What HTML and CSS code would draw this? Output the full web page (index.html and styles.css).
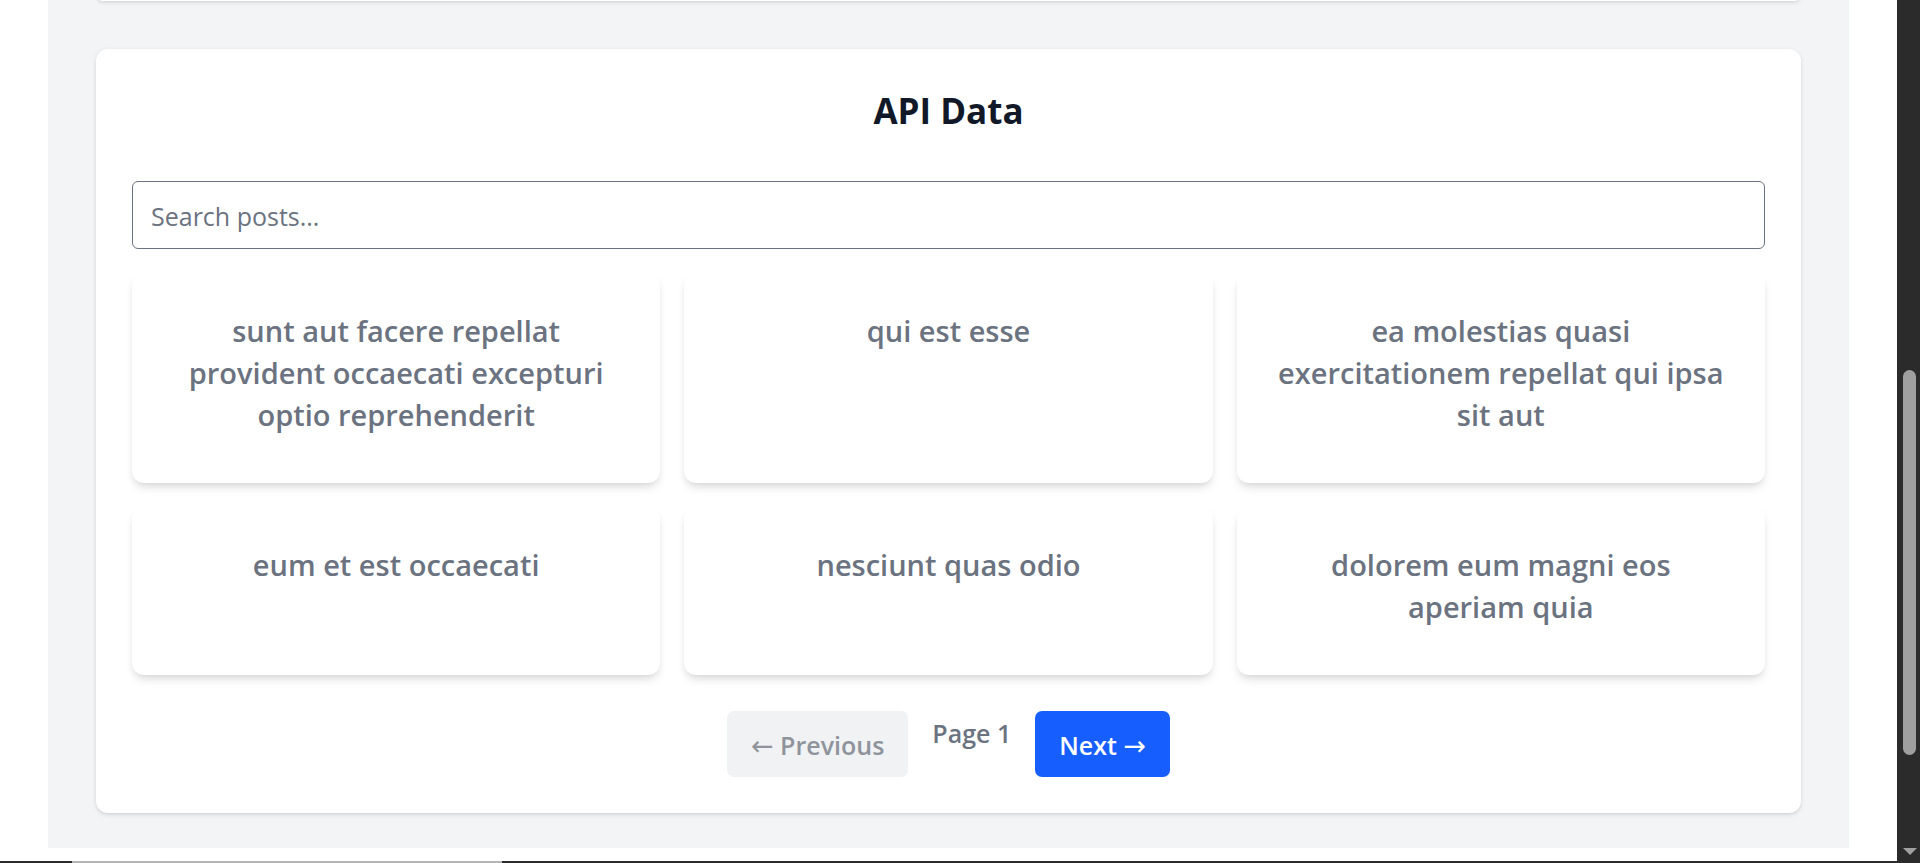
FILE: index.html
```html
<!DOCTYPE html>
<html lang="en">
<head>
<meta charset="utf-8">
<title>API Data</title>
<link rel="stylesheet" href="styles.css">
</head>
<body>
<div class="screen">
  <div class="viewport">
    <main class="page">
      <div class="shell">
        <div class="prev-card"></div>
        <section class="panel">
          <h2 class="panel-title">API Data</h2>
          <input class="search" type="text" placeholder="Search posts...">
          <div class="post-grid">
            <article class="post"><h3 class="post-title">sunt aut facere repellat provident occaecati excepturi optio reprehenderit</h3></article>
            <article class="post"><h3 class="post-title">qui est esse</h3></article>
            <article class="post"><h3 class="post-title">ea molestias quasi exercitationem repellat qui ipsa sit aut</h3></article>
            <article class="post"><h3 class="post-title">eum et est occaecati</h3></article>
            <article class="post"><h3 class="post-title">nesciunt quas odio</h3></article>
            <article class="post"><h3 class="post-title">dolorem eum magni eos aperiam quia</h3></article>
          </div>
          <nav class="pager">
            <button class="pager-btn prev" type="button" disabled><span class="arrow">←</span> Previous</button>
            <span class="pager-label">Page 1</span>
            <button class="pager-btn next" type="button">Next <span class="arrow">→</span></button>
          </nav>
        </section>
      </div>
    </main>
    <div class="vscroll">
      <div class="vthumb"></div>
      <div class="varrow"></div>
    </div>
  </div>
  <div class="hstrip">
    <span class="seg dark s1"></span>
    <span class="seg light s2"></span>
    <span class="seg dark s3"></span>
  </div>
</div>
</body>
</html>
```

FILE: styles.css
```css
* { box-sizing: border-box; }

html, body {
  margin: 0;
  padding: 0;
  height: 863px;
  overflow: hidden;
  background: #ffffff;
  font-family: "Open Sans", "Noto Sans", sans-serif;
}

.screen {
  display: flex;
  flex-direction: column;
  height: 863px;
}

.viewport {
  display: flex;
  height: 861px;
}

.page {
  flex: 1;
  overflow: hidden;
  background: #ffffff;
  padding: 0 48px;
}

.shell {
  background: #f3f4f6;
  padding: 0 48px 35px;
}

.prev-card {
  height: 13px;
  margin-top: -12px;
  background: #ffffff;
  border-radius: 12px;
  box-shadow: 0 1.5px 4.5px rgba(0,0,0,0.1), 0 1.5px 3px -1.5px rgba(0,0,0,0.1);
}

.panel {
  margin-top: 48px;
  background: #ffffff;
  border-radius: 12px;
  padding: 36px;
  box-shadow: 0 1.5px 4.5px rgba(0,0,0,0.1), 0 1.5px 3px -1.5px rgba(0,0,0,0.1);
}

.panel-title {
  margin: 0 0 46px;
  padding-top: 2px;
  text-align: center;
  font-size: 35px;
  line-height: 48px;
  font-weight: 700;
  color: #111827;
}

.search {
  display: block;
  width: 100%;
  height: 68px;
  margin: 0 0 24px;
  padding: 2px 18px 0;
  border: 1px solid #6b7280;
  border-radius: 6px;
  font-family: inherit;
  font-size: 25px;
  color: #111827;
  background: #ffffff;
  outline: none;
}

.search::placeholder {
  color: #6b7280;
  opacity: 1;
}

.post-grid {
  display: grid;
  grid-template-columns: repeat(3, 1fr);
  gap: 24px;
}

.post {
  background: #ffffff;
  border-radius: 12px;
  padding: 37px 36px 35px;
  box-shadow: 0 6px 9px -1.5px rgba(0,0,0,0.1), 0 3px 6px -3px rgba(0,0,0,0.1);
}

.post-title {
  margin: 0 0 12px;
  text-align: center;
  font-size: 29px;
  line-height: 42px;
  font-weight: 600;
  color: #6b7280;
}

.pager {
  margin-top: 36px;
  display: flex;
  justify-content: center;
  align-items: flex-start;
  gap: 24px;
}

.pager-btn {
  display: block;
  height: 66px;
  font-family: inherit;
  font-size: 25px;
  line-height: 42px;
  padding: 13px 24px 11px;
  border: none;
  border-radius: 7px;
  font-weight: 600;
  white-space: nowrap;
}

.arrow {
  font-family: "DejaVu Sans", sans-serif;
  font-weight: 400;
  font-size: 27px;
  line-height: 1;
}

.pager-btn.prev {
  background: #f1f2f4;
  color: #8f949c;
}

.pager-btn.next {
  background: #175eff;
  color: #ffffff;
}

.pager-label {
  padding-top: 1px;
  font-size: 25px;
  line-height: 42px;
  font-weight: 600;
  color: #6b7280;
}

.vscroll {
  width: 23px;
  background: #2b2b2b;
  display: flex;
  flex-direction: column;
  align-items: center;
  padding-top: 370px;
}

.vthumb {
  width: 13px;
  height: 385px;
  margin-left: 2px;
  background: #9f9f9f;
  border-radius: 7px;
}

.varrow {
  margin-top: auto;
  margin-bottom: 6px;
  margin-left: 2px;
  width: 0;
  height: 0;
  border-left: 7px solid transparent;
  border-right: 7px solid transparent;
  border-top: 7px solid #a0a0a0;
}

.hstrip {
  display: flex;
  height: 2px;
}

.seg { display: block; height: 2px; }
.seg.dark { background: #2b2b2b; }
.seg.light { background: #b5b5b5; }
.s1 { width: 72px; }
.s2 { width: 430px; }
.s3 { flex: 1; }
```
